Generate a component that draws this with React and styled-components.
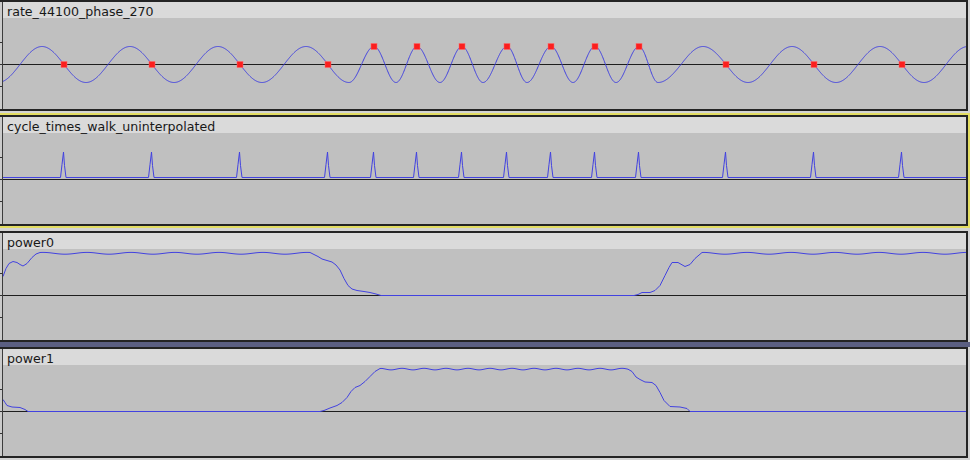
import React from 'react';
import styled, { createGlobalStyle } from 'styled-components';

const GlobalStyle = createGlobalStyle`
  html, body {
    margin: 0;
    padding: 0;
    background: #d3d3d3;
  }
  body {
    width: 970px;
    height: 460px;
    overflow: hidden;
    font-family: "DejaVu Sans", "Liberation Sans", sans-serif;
  }
`;

const WAVE = '#4242e0';
const PLOT_W = 963;
const PLOT_H = 91;
const ZERO = 46.5;

const TrackList = styled.main`
  display: flex;
  flex-direction: column;
  width: 970px;
`;

const Gap = styled.div`
  flex: none;
  height: ${(p) => p.$h}px;
  background: ${(p) => p.$color || 'transparent'};
`;

const FocusRing = styled.div`
  flex: none;
  width: 968px;
  border: 2px solid #e3dd62;
  border-left: none;
`;

const TrackBox = styled.section`
  box-sizing: border-box;
  flex: none;
  display: flex;
  width: 968px;
  height: 111px;
  border: 2px solid #242424;
  border-left: none;
  background: #c0c0c0;
`;

const Ruler = styled.div`
  flex: none;
  display: flex;
  flex-direction: column;
  width: 2px;
  background: #cbcbcb;
  border-right: 1px solid #3c3c3c;
`;

const RulerHead = styled.div`
  height: 16px;
  flex: none;
`;

const RulerTicks = styled.svg`
  display: block;
  width: 2px;
  height: ${PLOT_H}px;
`;

const Body = styled.div`
  flex: 1;
  min-width: 0;
  display: flex;
  flex-direction: column;
`;

const Header = styled.header`
  box-sizing: border-box;
  height: 16px;
  padding: 2px 0 0 4px;
  background: #dadada;
  color: #181818;
  font-size: 12.6px;
  line-height: 15px;
  white-space: nowrap;
`;

const Plot = styled.svg`
  display: block;
  width: ${PLOT_W}px;
  height: ${PLOT_H}px;
`;

// x positions of detected cycle boundaries, shared by the first two tracks
const CYCLES = [
  [64, 'z'], [152, 'z'], [240, 'z'], [328, 'z'],
  [374, 'p'], [417, 'p'], [462, 'p'], [507, 'p'], [551, 'p'], [595, 'p'], [639, 'p'],
  [726, 'z'], [814, 'z'], [902, 'z'],
];

// phase (in cycles) of the test tone: slow, a faster stretch in the middle, slow again
const PHASE_KEYS = [
  [328, 3.5], [349, 3.75], [374, 4.25], [396, 4.75], [417, 5.25], [440, 5.75],
  [462, 6.25], [483, 6.75], [507, 7.25], [527, 7.75], [551, 8.25], [573, 8.75],
  [595, 9.25], [616, 9.75], [639, 10.25], [658, 10.75], [681, 11], [703, 11.25],
  [726, 11.5],
];

function phaseAt(x) {
  if (x <= 328) return (x - 20) / 88;
  if (x >= 726) return 11.5 + (x - 726) / 88;
  for (let i = 0; i < PHASE_KEYS.length - 1; i++) {
    const [x0, p0] = PHASE_KEYS[i];
    const [x1, p1] = PHASE_KEYS[i + 1];
    if (x >= x0 && x <= x1) return p0 + ((x - x0) / (x1 - x0)) * (p1 - p0);
  }
  return 0;
}

function sinePath() {
  let d = '';
  for (let x = 3; x <= 966; x += 0.5) {
    const y = ZERO - 18 * Math.sin(2 * Math.PI * phaseAt(x));
    d += `${d ? 'L' : 'M'}${x.toFixed(1)} ${y.toFixed(2)}`;
  }
  return d;
}

function ripple(x0, x1, base, amp, period, offset) {
  const pts = [];
  for (let x = x0; x <= x1; x += 2) {
    pts.push([x, base + amp * Math.cos((2 * Math.PI * (x - offset)) / period)]);
  }
  return pts;
}

const toPath = (pts) =>
  pts.map(([x, h], i) => `${i ? 'L' : 'M'}${x} ${(ZERO - h).toFixed(2)}`).join('');

const POWER0 = [
  [3, 19], [6, 27], [9, 32], [13, 34], [17, 33], [20, 31], [23, 29.5], [27, 32],
  [32, 38], [36, 41.5], [40, 43],
  ...ripple(42, 310, 42.2, 0.9, 44, 43),
  [314, 41], [318, 39], [322, 36.5], [327, 35], [332, 33.5], [336, 30.5], [340, 25.5],
  [344, 17], [348, 10], [352, 6.5], [357, 5], [364, 4], [370, 3], [376, 1.5], [381, 0],
  [634, 0], [638, 1], [642, 3], [650, 3], [655, 5], [660, 10], [665, 20], [669, 28],
  [672, 33], [678, 33], [685, 29], [690, 31], [695, 37], [702, 43],
  ...ripple(704, 966, 42.2, 0.9, 44, 43),
];

const POWER1 = [
  [3, 12], [5, 9], [7, 6], [12, 4.5], [20, 4], [25, 2], [28, 0], [320, 0], [324, 1],
  [330, 3.5], [337, 6], [342, 9], [347, 14], [351, 20], [355, 24], [360, 26], [365, 30],
  [370, 35], [375, 40], [380, 43],
  ...ripple(382, 628, 42.4, 0.8, 22, 380),
  [632, 40], [636, 34.5], [640, 32], [645, 29.5], [652, 29], [656, 26], [660, 19],
  [664, 11], [670, 5], [680, 4.5], [687, 3], [690, 0], [966, 0],
];

function spikesPath() {
  const base = ZERO - 2;
  let d = `M3 ${base}`;
  CYCLES.forEach(([x]) => {
    const c = x - 0.5;
    d += `L${c - 3} ${base}L${c - 1.5} ${base - 13}L${c} ${base - 25.5}L${c + 1} ${base - 12}L${c + 2.5} ${base}`;
  });
  d += `L966 ${base}`;
  return d;
}

function ZeroLine() {
  return <line x1="3" x2="966" y1={ZERO} y2={ZERO} stroke="#1e1e1e" strokeWidth="1" />;
}

function Track({ name, children }) {
  return (
    <TrackBox>
      <Ruler>
        <RulerHead />
        <RulerTicks viewBox={`0 0 2 ${PLOT_H}`}>
          {[ZERO - 22, ZERO, ZERO + 22].map((y) => (
            <line key={y} x1="0" x2="2" y1={y} y2={y} stroke="#333" strokeWidth="1" />
          ))}
        </RulerTicks>
      </Ruler>
      <Body>
        <Header>{name}</Header>
        <Plot viewBox={`3 0 ${PLOT_W} ${PLOT_H}`}>
          <ZeroLine />
          {children}
        </Plot>
      </Body>
    </TrackBox>
  );
}

export default function App() {
  const sine = sinePath();
  return (
    <>
      <GlobalStyle />
      <TrackList>
        <Track name="rate_44100_phase_270">
          <path d={sine} fill="none" stroke={WAVE} strokeWidth="1" />
          {CYCLES.map(([x, kind]) => (
            <rect
              key={x}
              x={x - 3}
              y={(kind === 'z' ? ZERO : ZERO - 18) - 3}
              width="6"
              height="6"
              fill="#fb1f1f"
              stroke="#ff6a6a"
              strokeWidth="0.5"
            />
          ))}
        </Track>
        <Gap $h={2} />
        <FocusRing>
          <Track name="cycle_times_walk_uninterpolated">
            <path d={spikesPath()} fill="none" stroke={WAVE} strokeWidth="1" />
          </Track>
        </FocusRing>
        <Gap $h={3} />
        <Track name="power0">
          <path d={toPath(POWER0)} fill="none" stroke={WAVE} strokeWidth="1" />
        </Track>
        <Gap $h={5} $color="#5b5f82" />
        <Track name="power1">
          <path d={toPath(POWER1)} fill="none" stroke={WAVE} strokeWidth="1" />
        </Track>
      </TrackList>
    </>
  );
}
